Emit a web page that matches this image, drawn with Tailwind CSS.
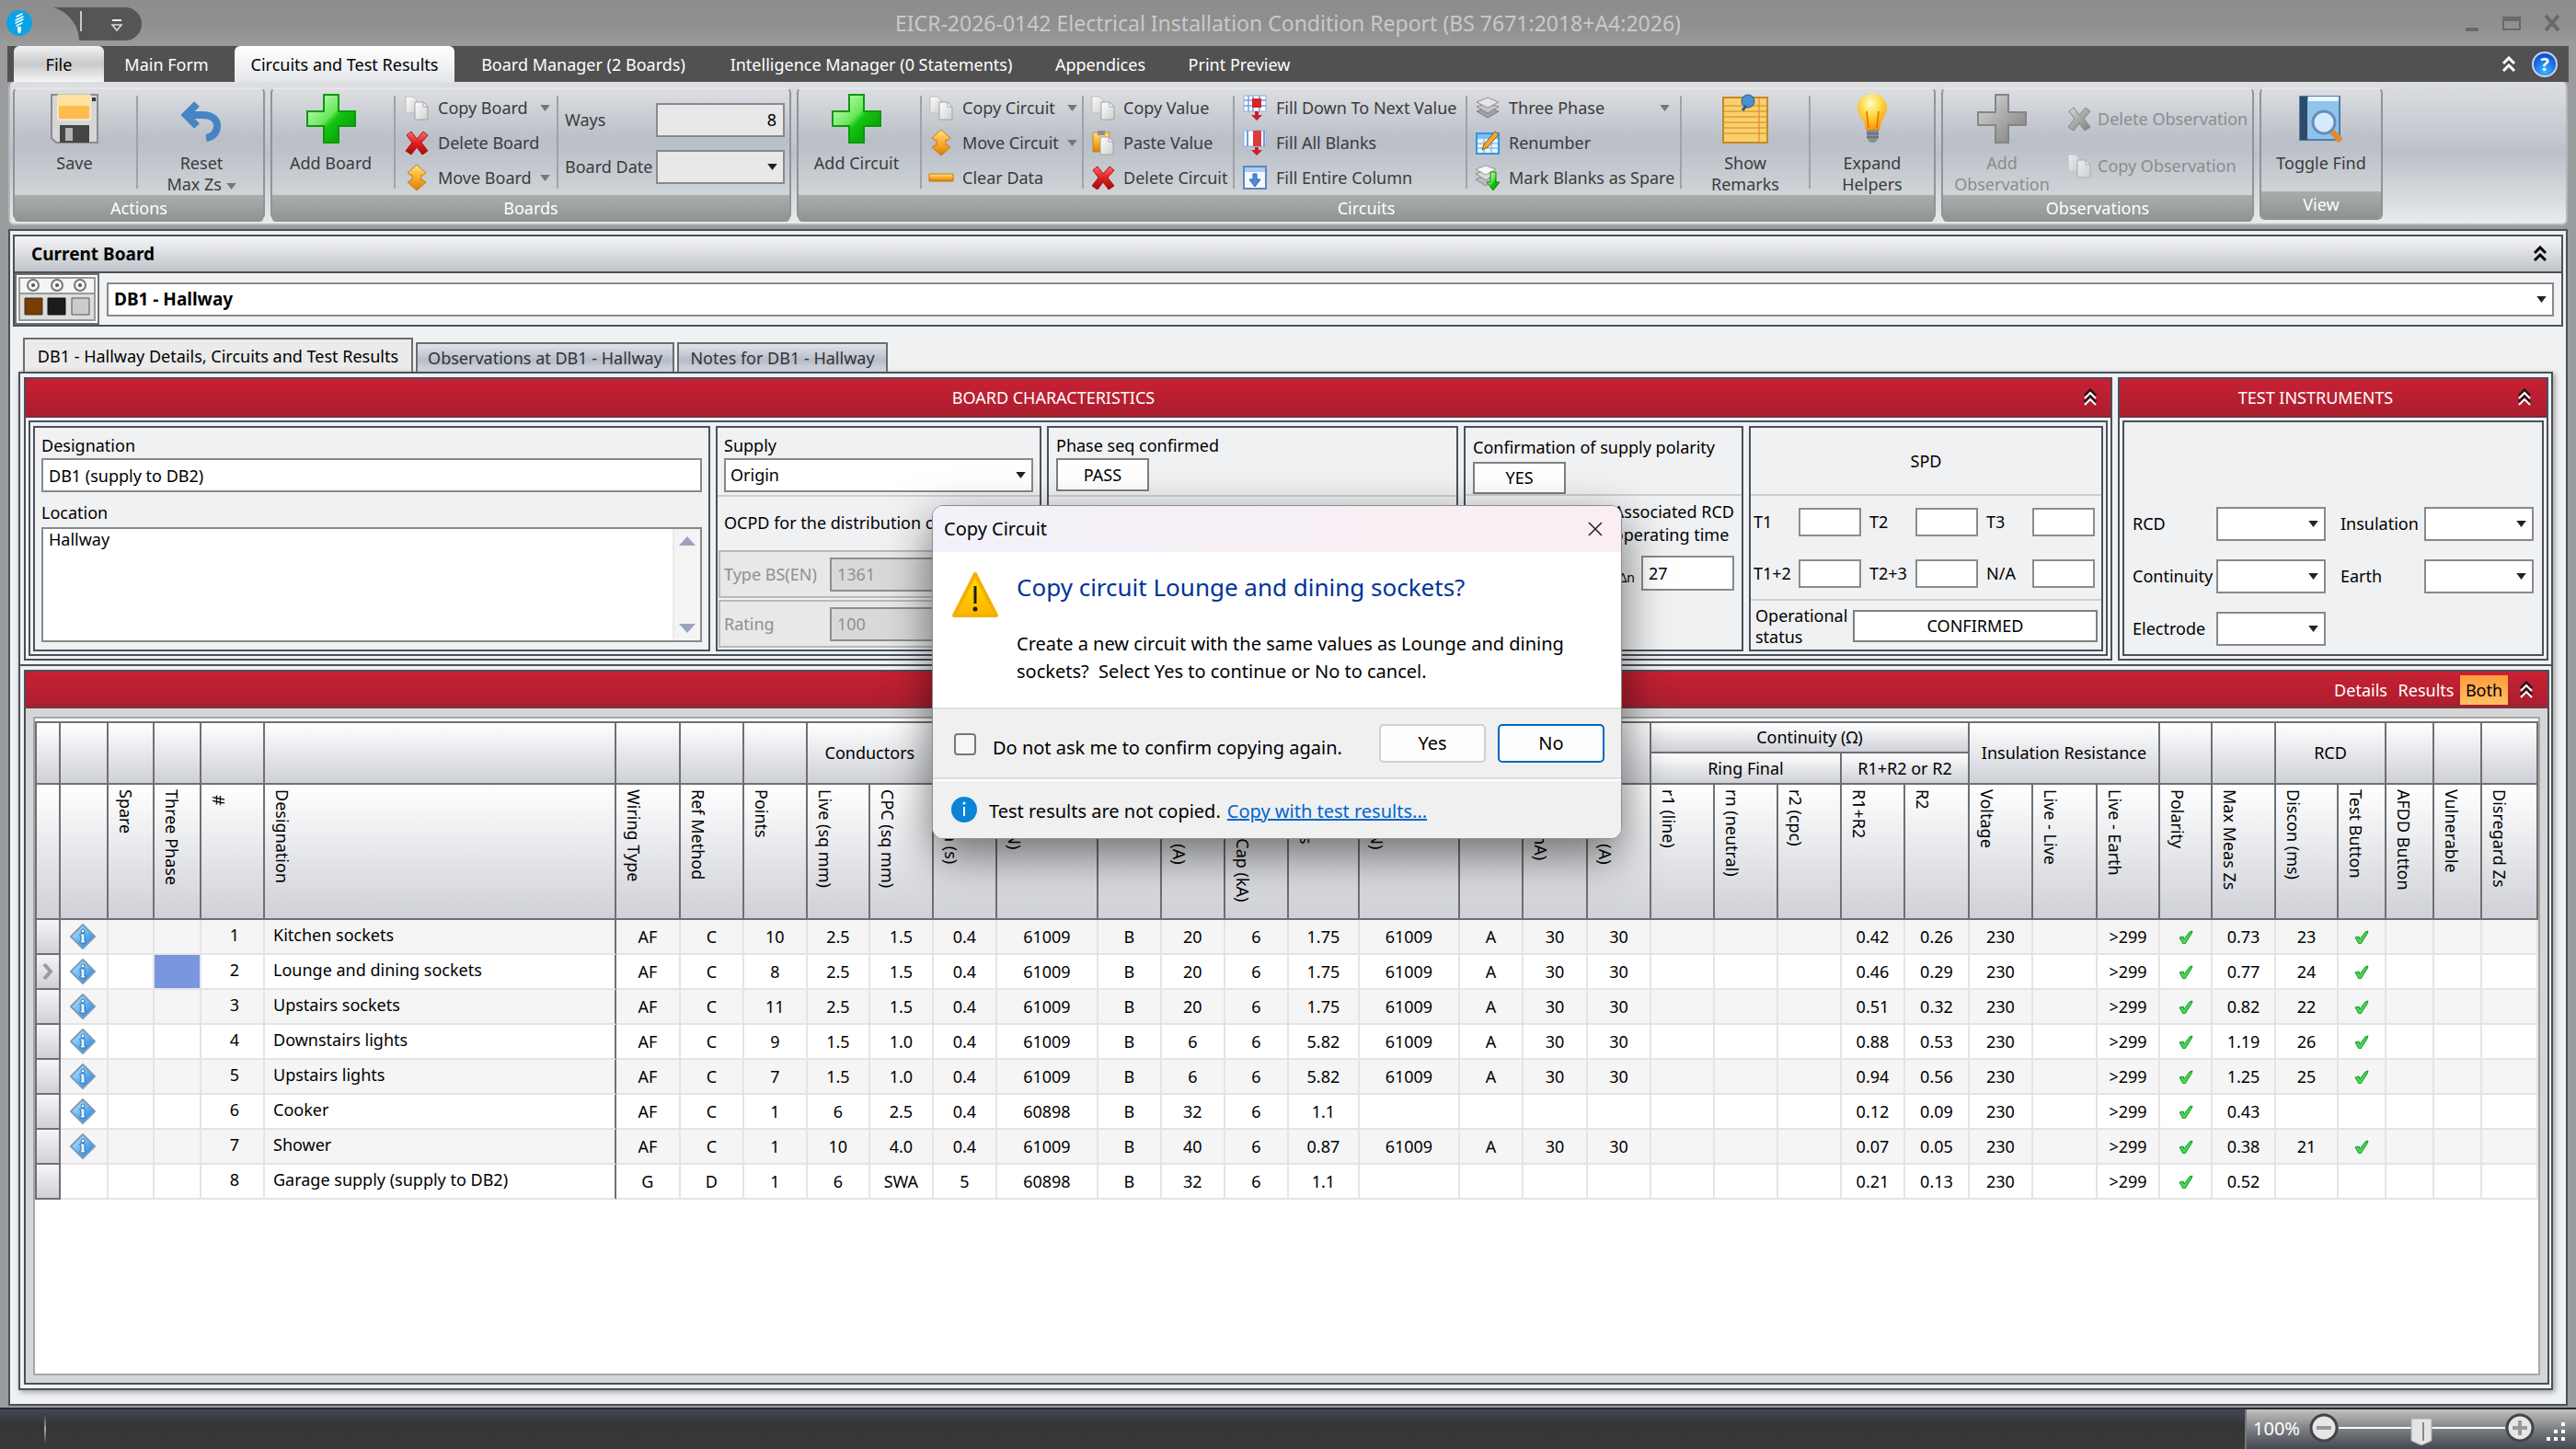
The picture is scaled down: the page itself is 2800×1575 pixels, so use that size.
<!DOCTYPE html>
<html lang="en">
<head>
<meta charset="utf-8">
<title>EICR-2026-0142 Electrical Installation Condition Report</title>
<script src="https://cdn.jsdelivr.net/npm/@tailwindcss/browser@4"></script>
</head>
<body class="flex min-h-screen flex-col bg-[#9a9b9c] font-['Noto_Sans',sans-serif] text-[18px] leading-[23px] text-black">

<svg class="absolute h-0 w-0" aria-hidden="true">
  <defs>
    <linearGradient id="gGreen" x1="0" y1="0" x2="1" y2="1"><stop offset="0" stop-color="#d8ffd0"/><stop offset=".45" stop-color="#6be85c"/><stop offset=".55" stop-color="#14c411"/><stop offset="1" stop-color="#048a04"/></linearGradient>
    <linearGradient id="gGrey" x1="0" y1="0" x2="1" y2="1"><stop offset="0" stop-color="#dcdcdc"/><stop offset=".5" stop-color="#a9a9a9"/><stop offset="1" stop-color="#7d7d7d"/></linearGradient>
    <linearGradient id="gRed" x1="0" y1="0" x2="0" y2="1"><stop offset="0" stop-color="#ff6a6a"/><stop offset=".5" stop-color="#e02020"/><stop offset="1" stop-color="#a80808"/></linearGradient>
    <linearGradient id="gGold" x1="0" y1="0" x2="0" y2="1"><stop offset="0" stop-color="#ffe08a"/><stop offset=".5" stop-color="#fbb02c"/><stop offset="1" stop-color="#d97c06"/></linearGradient>
    <linearGradient id="gPaper" x1="0" y1="0" x2="1" y2="1"><stop offset="0" stop-color="#ffffff"/><stop offset="1" stop-color="#cfcfcf"/></linearGradient>
    <linearGradient id="gBlue" x1="0" y1="0" x2="1" y2="1"><stop offset="0" stop-color="#d9f1ff"/><stop offset=".45" stop-color="#6fbdf8"/><stop offset="1" stop-color="#0b6fd6"/></linearGradient>
    <linearGradient id="gWarn" x1="0" y1="0" x2="0" y2="1"><stop offset="0" stop-color="#ffe100"/><stop offset="1" stop-color="#ffb400"/></linearGradient>
    <radialGradient id="gBulb" cx=".45" cy=".25" r=".8"><stop offset="0" stop-color="#fffbd0"/><stop offset=".4" stop-color="#ffdf4a"/><stop offset="1" stop-color="#ff8a00"/></radialGradient>
    <radialGradient id="gHelp" cx=".5" cy=".8" r=".8"><stop offset="0" stop-color="#39b6ff"/><stop offset="1" stop-color="#0a3fd0"/></radialGradient>
  </defs>
  <symbol id="plus" viewBox="0 0 56 56"><path d="M20 2h16v18h18v16H36v18H20V36H2V20h18z" fill="url(#gGreen)" stroke="#0a9a0a" stroke-width="2"/></symbol>
  <symbol id="plusGrey" viewBox="0 0 56 56"><path d="M21 2h14v19h19v14H35v19H21V35H2V21h19z" fill="url(#gGrey)" stroke="#858585" stroke-width="2"/></symbol>
  <symbol id="copy" viewBox="0 0 28 28"><path d="M2 2h8l4 4v14H2z" fill="url(#gPaper)" stroke="#bdbdbd"/><path d="M12 8h9l5 5v14H12z" fill="url(#gPaper)" stroke="#a2a2a2"/><path d="M21 8v5h5z" fill="#fff" stroke="#a2a2a2"/></symbol>
  <symbol id="paste" viewBox="0 0 28 28"><path d="M3 3h18v21H3z" fill="url(#gGold)" stroke="#c58a1c"/><path d="M8 1h8v5H8z" fill="#8e8e8e"/><path d="M11 8h9l5 5v14H11z" fill="url(#gPaper)" stroke="#a2a2a2"/><path d="M20 8v5h5z" fill="#fff" stroke="#a2a2a2"/></symbol>
  <symbol id="cross" viewBox="0 0 28 28"><path d="M3 6l5-4 6 8 7-8 5 4-7 8 7 9-6 4-6-8-6 8-6-4 7-9z" fill="url(#gRed)" stroke="#b01010"/></symbol>
  <symbol id="crossGrey" viewBox="0 0 28 28"><path d="M3 6l5-4 6 8 7-8 5 4-7 8 7 9-6 4-6-8-6 8-6-4 7-9z" fill="url(#gGrey)" stroke="#858585"/></symbol>
  <symbol id="move" viewBox="0 0 28 28"><path d="M14 0l10 9-3 2h-2v6h2l3 2-10 9-10-9 3-2h2v-6H7L4 9z" fill="url(#gGold)" stroke="#c9790c"/></symbol>
  <symbol id="minus" viewBox="0 0 28 28"><path d="M1 10h26v8H1z" fill="url(#gGold)" stroke="#c9790c"/></symbol>
  <symbol id="fillDown" viewBox="0 0 28 28"><path d="M2 1h24v17H2z" fill="#fff" stroke="#8ab0e0"/><path d="M2 6h24M2 12h24M7 1v17M12 1v17M19 1v17" stroke="#6f9fdc" stroke-width="1.5"/><path d="M11 4h10v10H11z" fill="#d8232a"/><path d="M14 18h4v4h4l-6 6-6-6h4z" fill="#c8202a"/></symbol>
  <symbol id="fillAll" viewBox="0 0 28 28"><path d="M2 1h24v17H2z" fill="#fff" stroke="#8ab0e0"/><path d="M6 1v17M24 1v17" stroke="#6f9fdc" stroke-width="2"/><path d="M12 1h9v17h-9z" fill="#dd3a40"/><path d="M14 19h4v3h4l-6 6-6-6h4z" fill="#c8202a"/></symbol>
  <symbol id="fillCol" viewBox="0 0 28 28"><path d="M2 2h24v24H2z" fill="#f4f9ff" stroke="#5e86bd" stroke-width="2"/><path d="M3 3h22v5H3z" fill="#a8cdf2"/><path d="M12 10h4v6h4l-6 8-6-8h4z" fill="#4b8fd8" stroke="#2a62a8"/></symbol>
  <symbol id="layers" viewBox="0 0 28 28"><path d="M14 14l12 4-12 7-12-7z" fill="#a2a2a2" stroke="#7d7d7d"/><path d="M14 9l12 4-12 7-12-7z" fill="#c4c4c4" stroke="#8a8a8a"/><path d="M14 3l12 5-12 6-12-6z" fill="#e6e6e6" stroke="#8f8f8f"/></symbol>
  <symbol id="renum" viewBox="0 0 28 28"><path d="M2 4h24v22H2z" fill="#e8f4ff" stroke="#2f95ee" stroke-width="2"/><path d="M3 5h22v5H3z" fill="#7cc0f8"/><path d="M3 15h22M3 20h22M10 10v15M18 10v15" stroke="#6f9fc8"/><path d="M8 22l2-6L22 2l4 3-12 14z" fill="#f6a82c" stroke="#8a5a10"/></symbol>
  <symbol id="mark" viewBox="0 0 28 28"><path d="M12 12l11 4-11 7-11-7z" fill="#bdbdbd" stroke="#8a8a8a"/><path d="M12 6l11 4-11 7-11-7z" fill="#dadada" stroke="#8a8a8a"/><path d="M12 1l11 4-11 6L1 5z" fill="#f7f7f7" stroke="#9a9a9a"/><path d="M17 8h6v11h4l-7 9-7-9h4z" fill="url(#gGreen)" stroke="#078a07"/></symbol>
  <symbol id="info" viewBox="0 0 30 30"><path d="M15 2l13 13-13 13L2 15z" fill="url(#gBlue)" stroke="#7e9bb8" stroke-width="2" stroke-linejoin="round"/><circle cx="15" cy="9" r="2" fill="#fff" stroke="#2c6fb0" stroke-width="1"/><path d="M12 12h5v8h1v2h-6v-2h1v-6h-1z" fill="#e8f6ff" stroke="#2c6fb0" stroke-width="1"/></symbol>
  <symbol id="tick" viewBox="0 0 16 15"><path d="M1 8l4-1 1 3 6-8 3-1-1 3-7 11H5z" fill="#4fd25a" stroke="#0b9c1b"/></symbol>
  <symbol id="chev" viewBox="0 0 16 18"><path d="M2 8l6-6 6 6M2 16l6-6 6 6" fill="none" stroke="currentColor" stroke-width="3"/></symbol>
  <symbol id="chevDual" viewBox="0 0 16 20"><path d="M2 8l6-6 6 6M2 15l6-6 6 6" fill="none" stroke="#2a1418" stroke-width="3"/><path d="M2 11l6-6 6 6M2 18l6-6 6 6" fill="none" stroke="#fff" stroke-width="2"/></symbol>
  <symbol id="tri" viewBox="0 0 12 8"><path d="M0 0h12L6 8z" fill="currentColor"/></symbol>
</svg>

<!-- Title bar -->
<header class="flex h-[50px] items-center bg-linear-to-b from-[#8c8d8f] via-[#8f8f8f] to-[#9b9b9b] pl-[7px]">
  <svg class="h-[28px] w-[28px]" viewBox="0 0 28 28"><circle cx="14" cy="14" r="14" fill="#0aa3e6"/><path d="M11 7l6-3M10 11l8-4M10 14l8-4M11 17l6-3" stroke="#fff" stroke-width="1.5" stroke-linecap="round"/><path d="M12 18h4v4l-1 3h-2l-1-3z" fill="#fff"/></svg>
  <svg class="ml-[23px] h-[37px] w-[98px]" viewBox="0 0 98 37"><path d="M0 1h78a18 18 0 0 1 0 36H28C28 20 16 6 0 1z" fill="#555"/><path d="M30 5v22" stroke="#c8c8c8" stroke-width="2"/><path d="M64 15h10" stroke="#eee" stroke-width="2"/><path d="M64 20l5 6 5-6z" fill="none" stroke="#ddd" stroke-width="1.5"/></svg>
  <h1 class="flex-1 pr-[34px] text-center text-[23px] leading-[30px] text-[#c9c9c9]">EICR-2026-0142 Electrical Installation Condition Report (BS 7671:2018+A4:2026)</h1>
  <div class="flex items-center gap-[24px] pr-[16px] text-[#666a6b]">
    <button aria-label="Minimise"><svg class="h-[18px] w-[18px]" viewBox="0 0 18 18"><path d="M2 14h14v4H2z" fill="currentColor"/></svg></button>
    <button aria-label="Restore"><svg class="h-[18px] w-[20px]" viewBox="0 0 20 18"><path d="M1 3h18v13H1z" fill="none" stroke="currentColor" stroke-width="2"/><path d="M1 3h18v4H1z" fill="currentColor"/></svg></button>
    <button aria-label="Close"><svg class="h-[18px] w-[20px]" viewBox="0 0 20 18"><path d="M3 1l14 16M17 1L3 17" stroke="currentColor" stroke-width="4"/></svg></button>
  </div>
</header>

<!-- Ribbon tabs -->
<nav class="mx-[8px] flex h-[39px] items-stretch bg-[#515151] pl-[7px] text-white">
  <button class="w-[98px] rounded-t-md bg-linear-to-b from-[#f2f2f2] via-[#c8c9cb] to-[#f4f4f4] pt-[2px] text-black">File</button>
  <button class="w-[136px] pt-[2px]">Main Form</button>
  <button class="ml-[6px] w-[239px] rounded-t-md bg-linear-to-b from-white to-[#e4e7ea] pt-[2px] text-black">Circuits and Test Results</button>
  <button class="w-[280px] pt-[2px]">Board Manager (2 Boards)</button>
  <button class="w-[346px] pt-[2px]">Intelligence Manager (0 Statements)</button>
  <button class="w-[152px] pt-[2px]">Appendices</button>
  <button class="w-[150px] pt-[2px]">Print Preview</button>
  <div class="ml-auto flex items-center gap-[17px] pr-[12px]">
    <button aria-label="Collapse ribbon"><svg class="h-[18px] w-[16px]"><use href="#chev"/></svg></button>
    <button aria-label="Help"><svg class="h-[28px] w-[28px]" viewBox="0 0 28 28"><circle cx="14" cy="14" r="13" fill="url(#gHelp)" stroke="#c8d4e8" stroke-width="2"/><text x="14" y="21" text-anchor="middle" font-size="20" font-weight="bold" fill="#fff">?</text></svg></button>
  </div>
</nav>

<!-- Ribbon -->
<section class="mx-[9px] flex h-[156px] gap-[6px] rounded-md border-2 border-[#b4b6b8] border-t-[#dcdee0] bg-linear-to-b from-[#dcdee1] via-[#bcc1c9] to-[#e6eceb] pt-[4px] pb-[4px] pl-[3px] whitespace-nowrap text-[#3b3b3b]">

  <div class="flex w-[274px] flex-col rounded-md border-2 border-[#909397] border-t-[#e4e6e8] bg-linear-to-b from-[#dcdee1] via-[#b9bec7] via-40% to-[#d9dedf]">
    <div class="flex h-[115px]">
      <button class="flex w-[132px] flex-col items-center pt-[4px] pr-[2px]">
        <svg class="h-[56px] w-[56px]" viewBox="0 0 56 56"><path d="M3 2h50v52H8l-5-5z" fill="#d6d6d6" stroke="#8c8c8c" stroke-width="2"/><path d="M10 2h35v27H10z" fill="#fdbd4e" stroke="#fff"/><path d="M10 2h35v12H10z" fill="#ffe2a0"/><path d="M12 35h32v19H12z" fill="#454545"/><path d="M18 38h8v14h-8z" fill="#b5b5b5"/><path d="M47 5h4v4h-4z" fill="#333"/></svg>
        <span class="pt-[9px]">Save</span></button>
      <i class="my-[7px] w-[2px] bg-[#9fa3a8]"></i>
      <button class="flex flex-1 flex-col items-center pt-[4px] pl-[2px]">
        <svg class="h-[56px] w-[56px]" viewBox="0 0 56 56"><path d="M23 12L11 24l12 12" fill="none" stroke="#4585c4" stroke-width="8"/><path d="M12 24h17c12 0 16 6 16 12s-4 12-12 13" fill="none" stroke="#4585c4" stroke-width="8"/></svg>
        <span class="pt-[9px] leading-[23px]">Reset<br>Max Zs <svg class="inline h-[7px] w-[11px] text-[#777]"><use href="#tri"/></svg></span></button>
    </div>
    <div class="flex-1 rounded-b-sm bg-linear-to-b from-[#a9aead] to-[#8f9291] text-center leading-[29px] text-white">Actions</div>
  </div>

  <div class="flex w-[566px] flex-col rounded-md border-2 border-[#909397] border-t-[#e4e6e8] bg-linear-to-b from-[#dcdee1] via-[#b9bec7] via-40% to-[#d9dedf]">
    <div class="flex h-[115px]">
      <button class="flex w-[132px] shrink-0 flex-col items-center pt-[4px] pr-[5px]"><svg class="h-[56px] w-[56px]"><use href="#plus"/></svg><span class="pt-[9px]">Add Board</span></button>
      <i class="my-[7px] w-[2px] bg-[#9fa3a8]"></i>
      <div class="grid w-[175px] shrink-0 grid-rows-[38px_38px_38px] pt-[1px] pl-[9px]">
        <button class="flex items-center gap-[9px]"><svg class="h-[28px] w-[28px]"><use href="#copy"/></svg>Copy Board<svg class="mr-[12px] ml-auto h-[7px] w-[11px] text-[#777]"><use href="#tri"/></svg></button>
        <button class="flex items-center gap-[9px]"><svg class="h-[28px] w-[28px]"><use href="#cross"/></svg>Delete Board</button>
        <button class="flex items-center gap-[9px]"><svg class="h-[28px] w-[28px]"><use href="#move"/></svg>Move Board<svg class="mr-[12px] ml-auto h-[7px] w-[11px] text-[#777]"><use href="#tri"/></svg></button>
      </div>
      <i class="my-[7px] w-[2px] bg-[#9fa3a8]"></i>
      <div class="flex min-w-0 flex-1 flex-col justify-center gap-[14px] pt-[2px] pr-[5px] pl-[7px]">
        <div class="flex items-center"><label for="ways" class="w-[99px] shrink-0">Ways</label><input id="ways" value="8" class="h-[37px] w-full min-w-0 border-2 border-[#87898b] bg-[#e8e8e8] px-[7px] text-right text-black"></div>
        <div class="relative flex items-center"><label for="bdate" class="w-[99px] shrink-0">Board Date</label><select id="bdate" class="h-[37px] w-full min-w-0 appearance-none border-2 border-[#87898b] bg-[#e8e8e8]"><option></option></select><svg class="pointer-events-none absolute right-[8px] h-[7px] w-[11px] text-[#222]"><use href="#tri"/></svg></div>
      </div>
    </div>
    <div class="flex-1 rounded-b-sm bg-linear-to-b from-[#a9aead] to-[#8f9291] text-center leading-[29px] text-white">Boards</div>
  </div>

  <div class="flex w-[1238px] flex-col rounded-md border-2 border-[#909397] border-t-[#e4e6e8] bg-linear-to-b from-[#dcdee1] via-[#b9bec7] via-40% to-[#d9dedf]">
    <div class="flex h-[115px]">
      <button class="flex w-[132px] flex-col items-center pt-[4px] pr-[6px]"><svg class="h-[56px] w-[56px]"><use href="#plus"/></svg><span class="pt-[9px]">Add Circuit</span></button>
      <i class="my-[7px] w-[2px] bg-[#9fa3a8]"></i>
      <div class="grid w-[174px] grid-rows-[38px_38px_38px] pt-[1px] pl-[7px]">
        <button class="flex items-center gap-[9px]"><svg class="h-[28px] w-[28px]"><use href="#copy"/></svg>Copy Circuit<svg class="mr-[16px] ml-auto h-[7px] w-[11px] text-[#777]"><use href="#tri"/></svg></button>
        <button class="flex items-center gap-[9px]"><svg class="h-[28px] w-[28px]"><use href="#move"/></svg>Move Circuit<svg class="mr-[16px] ml-auto h-[7px] w-[11px] text-[#777]"><use href="#tri"/></svg></button>
        <button class="flex items-center gap-[9px]"><svg class="h-[28px] w-[28px]"><use href="#minus"/></svg>Clear Data</button>
      </div>
      <i class="my-[7px] w-[2px] bg-[#9fa3a8]"></i>
      <div class="grid w-[162px] grid-rows-[38px_38px_38px] pt-[1px] pl-[7px]">
        <button class="flex items-center gap-[8px]"><svg class="h-[28px] w-[28px] shrink-0"><use href="#copy"/></svg>Copy Value</button>
        <button class="flex items-center gap-[8px]"><svg class="h-[28px] w-[28px] shrink-0"><use href="#paste"/></svg>Paste Value</button>
        <button class="flex items-center gap-[8px]"><svg class="h-[28px] w-[28px] shrink-0"><use href="#cross"/></svg>Delete Circuit</button>
      </div>
      <i class="my-[7px] w-[2px] bg-[#9fa3a8]"></i>
      <div class="grid w-[251px] grid-rows-[38px_38px_38px] pt-[1px] pl-[8px]">
        <button class="flex items-center gap-[9px]"><svg class="h-[28px] w-[28px] shrink-0"><use href="#fillDown"/></svg>Fill Down To Next Value</button>
        <button class="flex items-center gap-[9px]"><svg class="h-[28px] w-[28px] shrink-0"><use href="#fillAll"/></svg>Fill All Blanks</button>
        <button class="flex items-center gap-[9px]"><svg class="h-[28px] w-[28px] shrink-0"><use href="#fillCol"/></svg>Fill Entire Column</button>
      </div>
      <i class="my-[7px] w-[2px] bg-[#9fa3a8]"></i>
      <div class="grid w-[231px] grid-rows-[38px_38px_38px] pt-[1px] pl-[8px]">
        <button class="flex items-center gap-[9px]"><svg class="h-[28px] w-[28px] shrink-0"><use href="#layers"/></svg>Three Phase<svg class="mr-[11px] ml-auto h-[7px] w-[11px] text-[#777]"><use href="#tri"/></svg></button>
        <button class="flex items-center gap-[9px]"><svg class="h-[28px] w-[28px] shrink-0"><use href="#renum"/></svg>Renumber</button>
        <button class="flex items-center gap-[9px]"><svg class="h-[28px] w-[28px] shrink-0"><use href="#mark"/></svg>Mark Blanks as Spare</button>
      </div>
      <i class="my-[7px] w-[2px] bg-[#9fa3a8]"></i>
      <button class="flex w-[138px] flex-col items-center pt-[4px]">
        <svg class="h-[56px] w-[56px]" viewBox="0 0 56 56"><path d="M4 5h48v49H4z" fill="#fbcf6a" stroke="#c08a2c" stroke-width="2"/><path d="M5 14h46M5 20h46M5 26h46M5 32h46M5 38h46M5 44h46" stroke="#d9a23c" stroke-width="1.5"/><path d="M43 5v49" stroke="#e07a30"/><circle cx="31" cy="9" r="7" fill="#4a8fd0" stroke="#2a5a90"/><path d="M25 19l4-5" stroke="#2a5a90" stroke-width="3"/></svg>
        <span class="pt-[9px] leading-[23px]">Show<br>Remarks</span></button>
      <i class="my-[7px] w-[2px] bg-[#9fa3a8]"></i>
      <button class="flex flex-1 flex-col items-center pt-[4px]">
        <svg class="h-[56px] w-[56px]" viewBox="0 0 56 56"><path d="M28 1c9 0 16 7 16 15 0 9-7 12-8 24H21C20 28 12 25 12 16 12 8 19 1 28 1z" fill="url(#gBulb)"/><path d="M24 38l-2-18M33 38l2-18" stroke="#e06a00" stroke-width="1.5"/><path d="M22 40h13v9l-4 5h-5l-4-5z" fill="#8a8d90"/><path d="M22 44h13M22 48h13" stroke="#55585a"/></svg>
        <span class="pt-[9px] leading-[23px]">Expand<br>Helpers</span></button>
    </div>
    <div class="flex-1 rounded-b-sm bg-linear-to-b from-[#a9aead] to-[#8f9291] text-center leading-[29px] text-white">Circuits</div>
  </div>

  <div class="flex w-[340px] flex-col rounded-md border-2 border-[#909397] border-t-[#e4e6e8] bg-linear-to-b from-[#dcdee1] via-[#b9bec7] via-40% to-[#d9dedf] text-[#8a8c8e]">
    <div class="flex h-[115px]">
      <button disabled class="flex w-[128px] flex-col items-center pt-[4px]"><svg class="h-[56px] w-[56px]"><use href="#plusGrey"/></svg><span class="pt-[9px] leading-[23px]">Add<br>Observation</span></button>
      <div class="flex flex-1 flex-col justify-center gap-[23px] pl-[6px]">
        <button disabled class="flex items-center gap-[6px]"><svg class="h-[28px] w-[28px] shrink-0"><use href="#crossGrey"/></svg>Delete Observation</button>
        <button disabled class="flex items-center gap-[6px]"><svg class="h-[28px] w-[28px] shrink-0 opacity-70"><use href="#copy"/></svg>Copy Observation</button>
      </div>
    </div>
    <div class="flex-1 rounded-b-sm bg-linear-to-b from-[#a9aead] to-[#8f9291] text-center leading-[29px] text-white">Observations</div>
  </div>

  <div class="flex w-[134px] flex-col rounded-md border-2 border-[#909397] border-t-[#e4e6e8] bg-linear-to-b from-[#dcdee1] via-[#b9bec7] via-40% to-[#d9dedf]">
    <button class="flex h-[115px] flex-col items-center pt-[4px]">
      <svg class="h-[56px] w-[56px]" viewBox="0 0 56 56"><path d="M5 4h43v47H5z" fill="#8fc3ea" stroke="#4a7fae" stroke-width="2"/><path d="M5 4h8v47H5z" fill="#2f4a68"/><path d="M14 4h33v5H14z" fill="#e8f4ff"/><path d="M39 41l10 11" stroke="#e08a3c" stroke-width="7"/><circle cx="31" cy="32" r="12" fill="#d4ebff" stroke="#6a8db8" stroke-width="3"/></svg>
      <span class="pt-[9px]">Toggle Find</span></button>
    <div class="flex-1 rounded-b-sm bg-linear-to-b from-[#a9aead] to-[#8f9291] text-center leading-[29px] text-white">View</div>
  </div>
</section>

<!-- Workspace -->
<main class="mx-[9px] mt-[4px] mb-[2px] flex flex-1 flex-col border-2 border-[#4b4f58] bg-[#f0f1f3] px-[3px] pt-[4px] pb-[15px]">

  <section class="border-2 border-[#4b5158]">
    <div class="flex h-[40px] items-center justify-between border-b-2 border-[#4b5158] bg-linear-to-b from-[#f4f5f6] to-[#c0c4ca] pr-[15px] pl-[18px]">
      <h2 class="text-[19px] font-bold">Current Board</h2>
      <button aria-label="Collapse current board"><svg class="h-[18px] w-[16px]"><use href="#chev"/></svg></button>
    </div>
    <div class="flex h-[56px] items-center pr-[8px]">
      <svg class="h-[56px] w-[92px]" viewBox="0 0 92 56"><path d="M1 1h90v54H1z" fill="#fff" stroke="#6e7173" stroke-width="2"/><path d="M5 5h82v46H5z" fill="#ddd" stroke="#999" stroke-width="2"/><path d="M6 6h80v15H6z" fill="#f4f4f4"/><g fill="none" stroke="#777" stroke-width="2"><circle cx="20" cy="13" r="6"/><circle cx="46" cy="13" r="6"/><circle cx="71" cy="13" r="6"/></g><g fill="#555"><circle cx="20" cy="13" r="2"/><circle cx="46" cy="13" r="2"/><circle cx="71" cy="13" r="2"/></g><path d="M6 22h80" stroke="#999" stroke-width="2"/><path d="M11 27h19v18H11z" fill="#7a3c00" stroke="#333"/><path d="M36 27h19v18H36z" fill="#1c1c1c" stroke="#111"/><path d="M62 27h19v18H62z" fill="#ccc" stroke="#555"/></svg>
      <div class="relative ml-[8px] flex flex-1 items-center">
        <select aria-label="Current board" class="h-[37px] w-full appearance-none border-2 border-[#87898b] bg-white px-[6px] text-[19px] font-bold"><option>DB1 - Hallway</option></select>
        <svg class="pointer-events-none absolute right-[8px] h-[7px] w-[11px] text-[#222]"><use href="#tri"/></svg>
      </div>
    </div>
  </section>

  <div class="mt-[12px] flex items-end gap-[3px] pl-[11px]" role="tablist">
    <button role="tab" class="h-[37px] w-[424px] border-2 border-b-0 border-[#6a6d70] bg-[#ebebeb] pt-[2px]">DB1 - Hallway Details, Circuits and Test Results</button>
    <button role="tab" class="h-[32px] w-[281px] border-2 border-b-0 border-[#6a6d70] bg-linear-to-b from-[#e0e4ea] via-[#b6bcc8] via-60% to-[#d8dce4] text-[#333]">Observations at DB1 - Hallway</button>
    <button role="tab" class="h-[32px] w-[229px] border-2 border-b-0 border-[#6a6d70] bg-linear-to-b from-[#e0e4ea] via-[#b6bcc8] via-60% to-[#d8dce4] text-[#333]">Notes for DB1 - Hallway</button>
  </div>

  <div class="mx-[6px] mr-[11px] flex flex-1 flex-col border-2 border-[#4b5158] bg-[#eef2f6] shadow-[2px_2px_6px_#999]">
    <div class="flex gap-[6px] border-b-2 border-[#4b4f58] py-[4px] pr-[3px] pl-[4px]">

      <!-- Board characteristics -->
      <section class="flex flex-1 flex-col border-2 border-[#4b5158]">
        <div class="relative flex h-[42px] items-center justify-center border-b-2 border-[#7d2a3a] bg-linear-to-b from-[#c82033] to-[#ab1e2f] text-white">
          <h2 class="pr-[32px]">BOARD CHARACTERISTICS</h2>
          <button aria-label="Collapse board characteristics" class="absolute right-[14px]"><svg class="h-[20px] w-[16px]"><use href="#chevDual"/></svg></button>
        </div>
        <div class="m-[3px] flex flex-1 gap-[6px] border-2 border-[#4b5158] p-[3px] pt-[4px]">
          <div class="flex w-[736px] flex-col border-2 border-[#4b5158] bg-[#f0f1f3] px-[7px] pt-[8px] pb-[8px]">
            <label for="desig">Designation</label>
            <input id="desig" value="DB1 (supply to DB2)" class="mt-[2px] h-[37px] border-2 border-[#87898b] bg-white px-[6px]">
            <label for="loc" class="mt-[11px]">Location</label>
            <div class="relative mt-[4px] flex">
              <textarea id="loc" class="h-[125px] w-full resize-none border-2 border-[#87898b] bg-white px-[6px] py-0 leading-[23px]">Hallway</textarea>
              <div class="absolute inset-y-[2px] right-[2px] flex w-[30px] flex-col items-center justify-between border-l-2 border-[#eaeaea] bg-[#f4f4f4] py-[8px] text-[#9aa3c4]">
                <svg class="h-[10px] w-[18px]" viewBox="0 0 18 10"><path d="M9 0l9 10H0z" fill="currentColor"/></svg>
                <svg class="h-[10px] w-[18px]" viewBox="0 0 18 10"><path d="M0 0h18L9 10z" fill="currentColor"/></svg>
              </div>
            </div>
          </div>
          <div class="flex w-[354px] flex-col border-2 border-[#4b5158] bg-[#f0f1f3]">
            <div class="flex flex-col border-b-2 border-[#cfcfcf] px-[7px] pt-[8px] pb-[3px]">
              <label for="supply">Supply</label>
              <div class="relative mt-[2px] flex items-center"><select id="supply" class="h-[37px] w-full appearance-none border-2 border-[#87898b] bg-white px-[5px]"><option>Origin</option></select><svg class="pointer-events-none absolute right-[8px] h-[7px] w-[11px] text-[#222]"><use href="#tri"/></svg></div>
            </div>
            <div class="px-[7px] pt-[17px] pb-[17px] whitespace-nowrap">OCPD for the distribution circuit</div>
            <div class="m-[1px] flex h-[52px] items-center border-2 border-[#b9b9b9] bg-[#e8e8e8] pl-[4px] text-[#8f8f8f]"><label for="tbs" class="w-[115px]">Type BS(EN)</label><input id="tbs" disabled value="1361" class="h-[37px] w-[200px] border-2 border-[#8f8f8f] bg-[#d9d9d9] px-[6px]"></div>
            <div class="m-[1px] flex h-[52px] items-center border-2 border-[#b9b9b9] bg-[#e8e8e8] pl-[4px] text-[#8f8f8f]"><label for="rating" class="w-[115px]">Rating</label><input id="rating" disabled value="100" class="h-[37px] w-[200px] border-2 border-[#8f8f8f] bg-[#d9d9d9] px-[6px]"></div>
          </div>
          <div class="flex flex-1 flex-col border-2 border-[#4b5158] bg-[#f0f1f3]">
            <div class="border-b-2 border-[#cfcfcf] px-[8px] pt-[8px] pb-[4px]"><p>Phase seq confirmed</p><button class="mt-[2px] h-[36px] w-[101px] border-2 border-[#7d7f81] bg-white">PASS</button></div>
          </div>
          <div class="flex w-[304px] flex-col border-2 border-[#4b5158] bg-[#f0f1f3]">
            <div class="border-b-2 border-[#cfcfcf] px-[8px] pt-[10px] whitespace-nowrap"><p>Confirmation of supply polarity</p><button class="mt-[4px] h-[35px] w-[101px] border-2 border-[#7d7f81] bg-white">YES</button></div>
            <div class="flex flex-col items-end gap-[10px] pt-[5px] pr-[8px]">
              <label for="rcdt" class="leading-[25px] whitespace-nowrap">Associated RCD<br>operating time</label>
              <div class="flex items-center gap-[7px]"><span class="pt-[8px] text-[14px]">IΔn</span><input id="rcdt" value="27" class="h-[38px] w-[101px] border-2 border-[#87898b] bg-white px-[6px]"></div>
            </div>
          </div>
          <div class="flex w-[385px] flex-col border-2 border-[#4b5158] bg-[#f0f1f3]">
            <h3 class="flex h-[74px] items-center justify-center border-b-2 border-[#cfcfcf]">SPD</h3>
            <div class="grid flex-1 grid-cols-[120px_127px_127px] grid-rows-2 items-center">
              <label class="flex items-center justify-between pl-[3px]">T1<input class="h-[31px] w-[68px] border-2 border-[#8a8c8e] bg-white"></label>
              <label class="flex items-center justify-between pl-[9px]">T2<input class="h-[31px] w-[68px] border-2 border-[#8a8c8e] bg-white"></label>
              <label class="flex items-center justify-between pl-[9px]">T3<input class="h-[31px] w-[68px] border-2 border-[#8a8c8e] bg-white"></label>
              <label class="flex items-center justify-between pl-[3px]">T1+2<input class="h-[31px] w-[68px] border-2 border-[#8a8c8e] bg-white"></label>
              <label class="flex items-center justify-between pl-[9px]">T2+3<input class="h-[31px] w-[68px] border-2 border-[#8a8c8e] bg-white"></label>
              <label class="flex items-center justify-between pl-[9px]">N/A<input class="h-[31px] w-[68px] border-2 border-[#8a8c8e] bg-white"></label>
            </div>
            <div class="flex h-[55px] items-center gap-[8px] border-t-2 border-[#cfcfcf] pt-[2px] pr-[4px] pl-[5px]"><span class="w-[98px]">Operational status</span><button class="h-[35px] flex-1 border-2 border-[#7d7f81] bg-white">CONFIRMED</button></div>
          </div>
        </div>
      </section>

      <!-- Test instruments -->
      <section class="flex w-[468px] flex-col border-2 border-[#4b5158]">
        <div class="relative flex h-[42px] items-center justify-center border-b-2 border-[#7d2a3a] bg-linear-to-b from-[#c82033] to-[#ab1e2f] text-white">
          <h2 class="pr-[38px]">TEST INSTRUMENTS</h2>
          <button aria-label="Collapse test instruments" class="absolute right-[16px]"><svg class="h-[20px] w-[16px]"><use href="#chevDual"/></svg></button>
        </div>
        <div class="m-[3px] grid flex-1 grid-cols-[91px_119px_16px_91px_119px] content-end gap-y-[20px] border-2 border-[#4b5158] bg-[#f0f1f3] pb-[9px] pl-[9px]" id="instruments"></div>
      </section>
    </div>

    <!-- Circuit schedule -->
    <section class="m-[4px] mr-[2px] flex flex-1 flex-col border-2 border-[#4b5158] bg-[#d6d6d6]">
      <div class="flex h-[40px] items-center justify-end border-b-2 border-[#6d3a44] bg-linear-to-b from-[#c82033] to-[#ab1e2f] pt-[2px] pr-[15px] text-white">
        <button class="w-[68px]">Details</button>
        <button class="w-[74px]">Results</button>
        <button class="h-[32px] w-[52px] bg-linear-to-b from-[#ff9c3c] to-[#ffc062] text-black">Both</button>
        <button aria-label="Collapse circuits" class="ml-[12px]"><svg class="h-[20px] w-[16px]"><use href="#chevDual"/></svg></button>
      </div>
      <div class="m-[8px] mt-[9px] flex-1 border-2 border-[#a6a6a6] bg-white pt-[3px]">
        <table class="w-full table-fixed border-separate border-spacing-0 border-t-2 border-l-2 border-[#6e7073]">
          <colgroup id="cols"></colgroup>
          <thead id="head" class="text-left"></thead>
          <tbody id="rows" class="text-center"></tbody>
        </table>
      </div>
    </section>
  </div>
</main>

<!-- Status bar -->
<footer class="flex h-[45px] border-t-2 border-[#2a2b2e] bg-linear-to-b from-[#45475a] via-[#333434] via-40% to-[#3a3a3a]">
  <div class="my-[4px] ml-[48px] w-[2px] bg-linear-to-b from-[#333] via-[#aaa] to-[#333]"></div>
  <div class="ml-auto flex w-[360px] items-center border-l-2 border-[#777] bg-linear-to-b from-[#c2c2c2] via-[#6f7377] via-60% to-[#434852] pb-[3px] pl-[7px] text-[20px] text-white">
    <span class="w-[61px]">100%</span>
    <button aria-label="Zoom out"><svg class="h-[32px] w-[32px]" viewBox="0 0 32 32"><circle cx="16" cy="16" r="14" fill="#e6e6e6" stroke="#444" stroke-width="3"/><path d="M8 16h16" stroke="#999" stroke-width="4"/></svg></button>
    <svg class="h-[38px] w-[181px]" viewBox="0 0 181 38"><path d="M0 19h181" stroke="#fff" stroke-width="2"/><path d="M79 9h22v24l-11 5-11-5z" fill="#e4e4e4" stroke="#aaa"/><path d="M92 13v20" stroke="#888" stroke-width="2"/></svg>
    <button aria-label="Zoom in"><svg class="h-[32px] w-[32px]" viewBox="0 0 32 32"><circle cx="16" cy="16" r="14" fill="#e6e6e6" stroke="#444" stroke-width="3"/><path d="M8 16h16M16 8v16" stroke="#999" stroke-width="4"/></svg></button>
    <svg class="mt-[8px] ml-[12px] h-[22px] w-[22px]" viewBox="0 0 22 22" fill="#fff"><path d="M17 1h4v4h-4zM9 9h4v4H9zM17 9h4v4h-4zM1 17h4v4H1zM9 17h4v4H9zM17 17h4v4h-4z"/></svg>
  </div>
</footer>

<!-- Copy confirmation -->
<div role="dialog" aria-labelledby="dlgTitle" class="absolute top-[549px] left-1/2 ml-[-387px] w-[750px] overflow-hidden rounded-[12px] border border-[#8d8d8d] bg-white text-[20px] leading-[30px] shadow-[0_18px_50px_rgba(0,0,0,0.55)]">
  <div class="flex h-[50px] items-center justify-between bg-linear-to-r from-[#f3f1f9] to-[#faeef2] pr-[20px] pl-[12px]">
    <h2 id="dlgTitle">Copy Circuit</h2>
    <button aria-label="Close dialog"><svg class="h-[16px] w-[16px]" viewBox="0 0 16 16"><path d="M1 1l14 14M15 1L1 15" stroke="#222" stroke-width="1.5"/></svg></button>
  </div>
  <div class="flex h-[171px] border-b-2 border-[#dfdfdf] pt-[21px] pl-[21px]">
    <svg class="h-[51px] w-[50px]" viewBox="0 0 50 51"><path d="M25 3L48 48H2z" fill="url(#gWarn)" stroke="#f4b000" stroke-width="4" stroke-linejoin="round"/><path d="M25 16v19" stroke="#1c1c1c" stroke-width="3"/><circle cx="25" cy="41" r="2.5" fill="#1c1c1c"/></svg>
    <div class="ml-[20px]">
      <h3 class="text-[26px] leading-[34px] text-[#003399]">Copy circuit Lounge and dining sockets?</h3>
      <p class="mt-[30px] whitespace-pre">Create a new circuit with the same values as Lounge and dining
sockets?  Select Yes to continue or No to cancel.</p>
    </div>
  </div>
  <div class="flex h-[76px] items-center border-b-2 border-[#dedede] bg-[#f0f0f0] pr-[18px] pl-[23px]">
    <label class="flex flex-1 items-center gap-[18px] pt-[10px]"><input type="checkbox" class="mb-[9px] h-[24px] w-[24px] appearance-none rounded-[4px] border-2 border-[#777] bg-[#f6f6f6]">Do not ask me to confirm copying again.</label>
    <button class="h-[42px] w-[116px] rounded-[5px] border-2 border-[#d0d0d0] bg-[#fdfdfd]">Yes</button>
    <button class="ml-[13px] h-[42px] w-[116px] rounded-[5px] border-2 border-[#0067c0] bg-[#fdfdfd]">No</button>
  </div>
  <div class="flex h-[64px] items-center border-t-2 border-white bg-[#f0f0f0] pl-[20px]">
    <svg class="h-[28px] w-[28px]" viewBox="0 0 28 28"><circle cx="14" cy="14" r="14" fill="#0b84d8"/><path d="M14 11v10" stroke="#fff" stroke-width="2"/><circle cx="14" cy="7" r="1.5" fill="#fff"/></svg>
    <span class="ml-[13px] pt-[3px]">Test results are not copied.</span>
    <a href="#copy-results" class="ml-[7px] pt-[3px] text-[#0066cc] underline">Copy with test results...</a>
  </div>
</div>

<script>
const byId = id => document.getElementById(id);

byId('instruments').innerHTML = [['RCD', 'Insulation'], ['Continuity', 'Earth'], ['Electrode']].map(pair =>
  pair.map(name => `<label for="ti-${name}" class="self-center">${name}</label>
    <div class="relative flex items-center"><select id="ti-${name}" class="h-[37px] w-full appearance-none border-2 border-[#87898b] bg-white"><option></option></select>
    <svg class="pointer-events-none absolute right-[8px] h-[7px] w-[11px] text-[#222]"><use href="#tri"/></svg></div>`).join('<span></span>')).join('');

const widths = [26,52,50,51,69,'',70,69,69,68,69,69,110,69,69,69,77,109,69,70,69,69,69,69,69,70,69,70,68,57,69,68,52,52,52,61];
byId('cols').innerHTML = widths.map(w => w ? `<col style="width:${w}px">` : '<col>').join('');

const th = 'border-r-2 border-b-2 border-[#6e7073] bg-linear-to-b from-white to-[#cfd1d8] font-normal text-center';
const group = (text, span, rows) => `<th colspan="${span}" rowspan="${rows}" class="${th}">${text}</th>`;
const blanks = n => group('', 1, 2).repeat(n);
const names = ['','','Spare','Three Phase','#','Designation','Wiring Type','Ref Method','Points','Live (sq mm)','CPC (sq mm)','Discon (s)','BS\u00a0 (EN)','Type','Rating (A)','Break Cap (kA)','Max Zs','BS\u00a0 (EN)','Type','IΔn\u00a0 (mA)','Rating (A)','r1 (line)','rn (neutral)','r2 (cpc)','R1+R2','R2','Voltage','Live - Live','Live - Earth','Polarity','Max Meas Zs','Discon (ms)','Test Button','AFDD Button','Vulnerable','Disregard Zs'];
byId('head').innerHTML =
  `<tr class="h-[33px]">${blanks(9)}${group('Conductors', 2, 2)}${blanks(1)}${group('Overcurrent Device', 5, 2)}${group('RCD', 4, 2)}${group('Continuity (Ω)', 5, 1)}${group('Insulation Resistance', 3, 2)}${blanks(2)}${group('RCD', 2, 2)}${blanks(3)}</tr>
  <tr class="h-[34px]">${group('Ring Final', 3, 1)}${group('R1+R2 or R2', 2, 1)}</tr>
  <tr class="h-[147px]">${names.map(n => `<th scope="col" class="border-r-2 border-b-2 border-[#6e7073] bg-linear-to-b from-white to-[#cfd1d8] p-0 pt-[5px] pl-[7px] text-left align-top font-normal"><span class="inline-block whitespace-nowrap [writing-mode:vertical-rl]">${n}</span></th>`).join('')}</tr>`;

const data = [
  'Kitchen sockets|AF|C|10|2.5|1.5|0.4|61009|B|20|6|1.75|61009|A|30|30||||0.42|0.26|230||>299|✓|0.73|23|✓',
  'Lounge and dining sockets|AF|C|8|2.5|1.5|0.4|61009|B|20|6|1.75|61009|A|30|30||||0.46|0.29|230||>299|✓|0.77|24|✓',
  'Upstairs sockets|AF|C|11|2.5|1.5|0.4|61009|B|20|6|1.75|61009|A|30|30||||0.51|0.32|230||>299|✓|0.82|22|✓',
  'Downstairs lights|AF|C|9|1.5|1.0|0.4|61009|B|6|6|5.82|61009|A|30|30||||0.88|0.53|230||>299|✓|1.19|26|✓',
  'Upstairs lights|AF|C|7|1.5|1.0|0.4|61009|B|6|6|5.82|61009|A|30|30||||0.94|0.56|230||>299|✓|1.25|25|✓',
  'Cooker|AF|C|1|6|2.5|0.4|60898|B|32|6|1.1||||||||0.12|0.09|230||>299|✓|0.43||',
  'Shower|AF|C|1|10|4.0|0.4|61009|B|40|6|0.87|61009|A|30|30||||0.07|0.05|230||>299|✓|0.38|21|✓',
  'Garage supply (supply to DB2)|G|D|1|6|SWA|5|60898|B|32|6|1.1||||||||0.21|0.13|230||>299|✓|0.52||'
];
const td = 'border-r-2 border-b-2 border-[#e4e4e4] p-0';
byId('rows').innerHTML = data.map((line, i) => {
  const [name, ...cells] = line.split('|');
  while (cells.length < 30) cells.push('');
  return `<tr class="h-[38px] ${i % 2 ? 'bg-white' : 'bg-[#f5f5f5]'}">
    <td class="border-r-2 border-b-2 border-[#6e7073] bg-linear-to-b from-[#f6f6f8] to-[#cfd1d8] p-0">${i === 1 ? '<svg class="mx-auto h-[18px] w-[12px]" viewBox="0 0 12 18"><path d="M2 1l7 8-7 8" fill="none" stroke="#9a9ba0" stroke-width="4"/></svg>' : ''}</td>
    <td class="${td} pr-[3px]">${i < 7 ? '<svg class="mx-auto h-[30px] w-[30px]"><use href="#info"/></svg>' : ''}</td>
    <td class="${td}"></td>
    <td class="${td} ${i === 1 ? 'bg-[#7a96df]' : ''}"></td>
    <td class="${td} pr-[26px] pb-[4px] text-right">${i + 1}</td>
    <td class="border-r-2 border-b-2 border-[#e4e4e4] border-r-[#6e7073] p-0 pb-[4px] pl-[9px] text-left">${name}</td>
    ${cells.map(c => `<td class="${td}">${c === '✓' ? '<svg class="mx-auto h-[15px] w-[16px]" role="img" aria-label="Yes"><use href="#tick"/></svg>' : c.replace('>', '&gt;')}</td>`).join('')}
  </tr>`;
}).join('');
</script>
</body>
</html>
